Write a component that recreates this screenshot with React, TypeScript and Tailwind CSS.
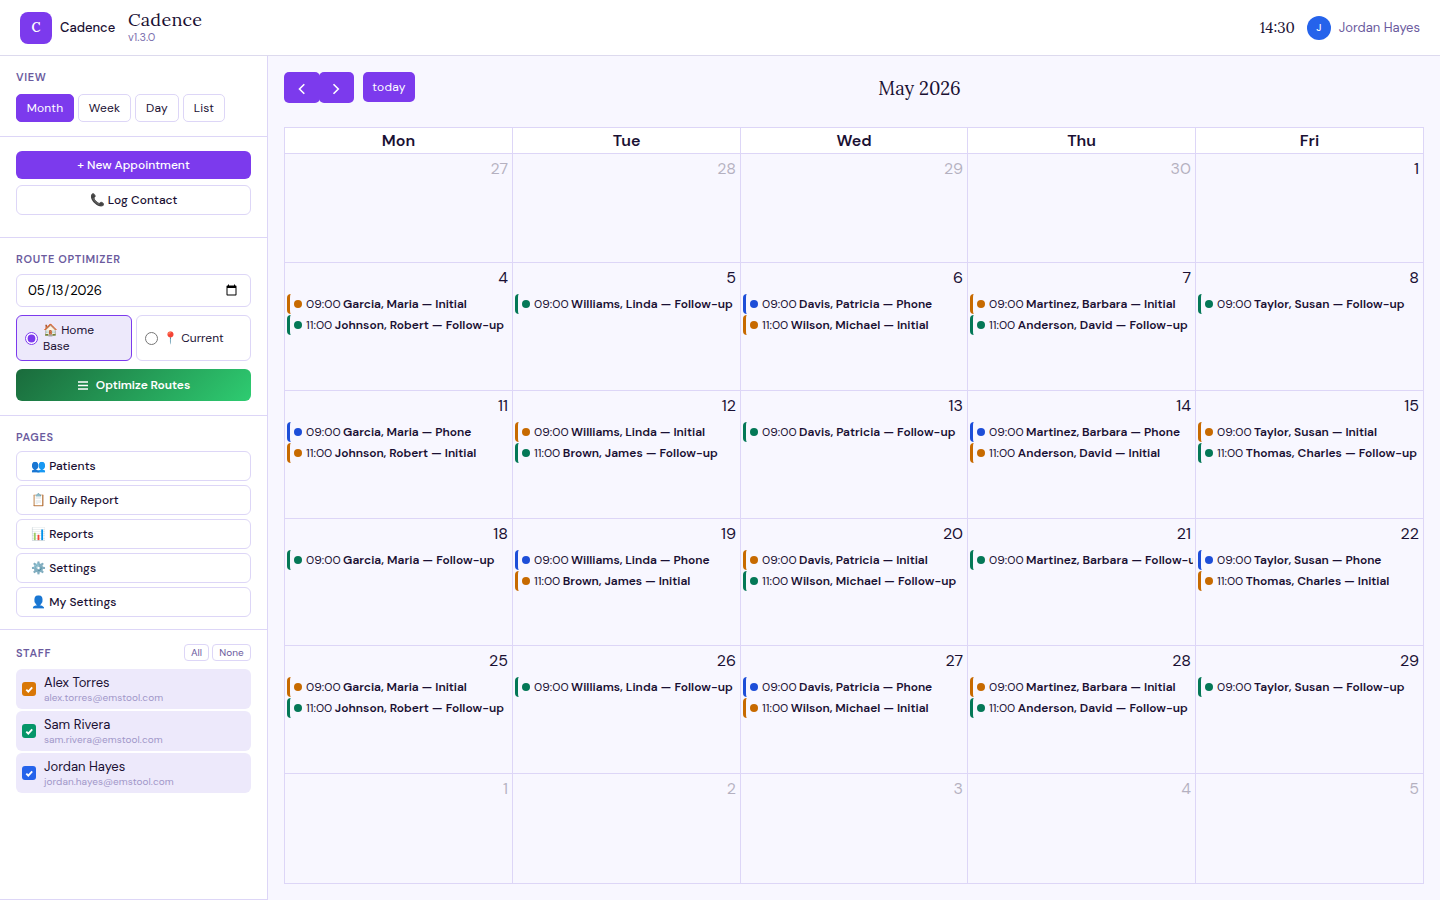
import React from 'react';

type Kind = 'Initial' | 'Follow-up' | 'Phone';
type Visit = { time: string; name: string; kind: Kind };
type Day = { day: number; muted?: boolean; visits?: Visit[] };

const views = [
  { label: 'Month', className: 'w-[58px] bg-[#7c3aed] border-[#7c3aed] text-white' },
  { label: 'Week', className: 'w-[53px] bg-white border-[#ddd6f7] text-[#1a1033]' },
  { label: 'Day', className: 'w-[44px] bg-white border-[#ddd6f7] text-[#1a1033]' },
  { label: 'List', className: 'w-[42px] bg-white border-[#ddd6f7] text-[#1a1033]' },
];

const pages = [
  { icon: '👥', label: 'Patients' },
  { icon: '📋', label: 'Daily Report' },
  { icon: '📊', label: 'Reports' },
  { icon: '⚙️', label: 'Settings' },
  { icon: '👤', label: 'My Settings' },
];

const staff = [
  { name: 'Alex Torres', email: 'alex.torres@emstool.com', color: 'bg-[#d97706]' },
  { name: 'Sam Rivera', email: 'sam.rivera@emstool.com', color: 'bg-[#059669]' },
  { name: 'Jordan Hayes', email: 'jordan.hayes@emstool.com', color: 'bg-[#2563eb]' },
];

const kindBorder: Record<Kind, string> = {
  Initial: 'border-[#c76a00]',
  'Follow-up': 'border-[#047857]',
  Phone: 'border-[#1d4ed8]',
};

const kindDot: Record<Kind, string> = {
  Initial: 'bg-[#c76a00]',
  'Follow-up': 'bg-[#047857]',
  Phone: 'bg-[#1d4ed8]',
};

const kindTracking: Record<Kind, string> = {
  Initial: 'tracking-[-0.02px]',
  'Follow-up': 'tracking-[0.03px]',
  Phone: 'tracking-[-0.02px]',
};

const at9 = (name: string, kind: Kind): Visit => ({ time: '09:00', name, kind });
const at11 = (name: string, kind: Kind): Visit => ({ time: '11:00', name, kind });

const weeks: Day[][] = [
  [
    { day: 27, muted: true },
    { day: 28, muted: true },
    { day: 29, muted: true },
    { day: 30, muted: true },
    { day: 1 },
  ],
  [
    { day: 4, visits: [at9('Garcia, Maria', 'Initial'), at11('Johnson, Robert', 'Follow-up')] },
    { day: 5, visits: [at9('Williams, Linda', 'Follow-up')] },
    { day: 6, visits: [at9('Davis, Patricia', 'Phone'), at11('Wilson, Michael', 'Initial')] },
    { day: 7, visits: [at9('Martinez, Barbara', 'Initial'), at11('Anderson, David', 'Follow-up')] },
    { day: 8, visits: [at9('Taylor, Susan', 'Follow-up')] },
  ],
  [
    { day: 11, visits: [at9('Garcia, Maria', 'Phone'), at11('Johnson, Robert', 'Initial')] },
    { day: 12, visits: [at9('Williams, Linda', 'Initial'), at11('Brown, James', 'Follow-up')] },
    { day: 13, visits: [at9('Davis, Patricia', 'Follow-up')] },
    { day: 14, visits: [at9('Martinez, Barbara', 'Phone'), at11('Anderson, David', 'Initial')] },
    { day: 15, visits: [at9('Taylor, Susan', 'Initial'), at11('Thomas, Charles', 'Follow-up')] },
  ],
  [
    { day: 18, visits: [at9('Garcia, Maria', 'Follow-up')] },
    { day: 19, visits: [at9('Williams, Linda', 'Phone'), at11('Brown, James', 'Initial')] },
    { day: 20, visits: [at9('Davis, Patricia', 'Initial'), at11('Wilson, Michael', 'Follow-up')] },
    { day: 21, visits: [at9('Martinez, Barbara', 'Follow-up')] },
    { day: 22, visits: [at9('Taylor, Susan', 'Phone'), at11('Thomas, Charles', 'Initial')] },
  ],
  [
    { day: 25, visits: [at9('Garcia, Maria', 'Initial'), at11('Johnson, Robert', 'Follow-up')] },
    { day: 26, visits: [at9('Williams, Linda', 'Follow-up')] },
    { day: 27, visits: [at9('Davis, Patricia', 'Phone'), at11('Wilson, Michael', 'Initial')] },
    { day: 28, visits: [at9('Martinez, Barbara', 'Initial'), at11('Anderson, David', 'Follow-up')] },
    { day: 29, visits: [at9('Taylor, Susan', 'Follow-up')] },
  ],
  [
    { day: 1, muted: true },
    { day: 2, muted: true },
    { day: 3, muted: true },
    { day: 4, muted: true },
    { day: 5, muted: true },
  ],
];

const Header = () => (
  <header className="flex items-center h-14 px-5 bg-white border-b border-[#dddaee] shrink-0">
    <div className="flex items-center justify-center size-8 rounded-lg bg-[#7c3aed] text-white text-[13px] leading-none font-semibold font-['Lora','Liberation_Serif',serif]">
      C
    </div>
    <span className="ml-2 w-[68px] text-[13px] font-medium whitespace-nowrap">Cadence</span>
    <div className="mb-1">
      <div className="text-[18px] leading-[22px] tracking-[0.25px] font-['Lora','Liberation_Serif',serif]">Cadence</div>
      <div className="text-[11px] leading-[12px] text-[#7c6fae]">v1.3.0</div>
    </div>
    <div className="ml-auto flex items-center">
      <span className="text-[15px] leading-5 font-['Lora','Liberation_Serif',serif]">14:30</span>
      <span className="ml-3 flex items-center justify-center size-6 rounded-full bg-[#2563eb] text-white text-[10px] font-medium">J</span>
      <span className="ml-2 text-[13px] text-[#6b5b9e]">Jordan Hayes</span>
    </div>
  </header>
);

const SectionTitle = ({ children }: { children: React.ReactNode }) => (
  <h3 className="text-[11px] leading-[14px] font-semibold tracking-[0.66px] text-[#6b5b9e]">{children}</h3>
);

const Sidebar = () => (
  <aside className="w-[268px] shrink-0 flex flex-col bg-white border-r border-b border-[#ddd6f7]">
    <section className="h-[81px] px-4 pt-[14px] border-b border-[#ddd6f7]">
      <SectionTitle>VIEW</SectionTitle>
      <div className="flex gap-1 mt-[10px]">
        {views.map((view) => (
          <button key={view.label} className={`h-7 rounded-[5px] border text-[12px] tracking-[0.2px] ${view.className}`}>
            {view.label}
          </button>
        ))}
      </div>
    </section>

    <section className="h-[101px] px-4 pt-[14px] border-b border-[#ddd6f7]">
      <button className="block w-full h-7 rounded-md bg-[#7c3aed] text-white text-[12px] font-medium">
        + New Appointment
      </button>
      <button className="block w-full h-[30px] mt-1.5 rounded-md border border-[#ddd6f7] text-[12px] font-medium tracking-[0.05px]">
        📞 Log Contact
      </button>
    </section>

    <section className="h-[178px] px-4 pt-[14px] border-b border-[#ddd6f7]">
      <SectionTitle>ROUTE OPTIMIZER</SectionTitle>
      <input
        type="date"
        defaultValue="2026-05-13"
        className="block w-full h-[33px] mt-2 px-[10px] rounded-md border border-[#ddd6f7] text-[13px] tracking-[-0.08px] text-black"
      />
      <div className="flex gap-1 mt-2">
        <label className="flex items-center w-[116px] h-[46px] pl-2 rounded-md border border-[#7c3aed] bg-[#ede9fb] text-[12px] leading-4">
          <input type="radio" name="origin" defaultChecked className="m-0 mr-[5px] size-[13px] shrink-0 accent-[#7c3aed]" />
          <span>
            🏠 Home
            <br />
            Base
          </span>
        </label>
        <label className="flex items-center w-[115px] h-[46px] pl-2 rounded-md border border-[#ddd6f7] text-[12px] leading-4">
          <input type="radio" name="origin" className="m-0 mr-[5px] size-[13px] shrink-0 accent-[#7c3aed]" />
          <span>📍 Current</span>
        </label>
      </div>
      <button className="flex items-center justify-center gap-2 w-full h-8 mt-2 pl-px rounded-md bg-linear-135 from-[#1a6b3c] to-[#2ecc71] text-white text-[12px] font-semibold tracking-[-0.05px]">
        <svg width="10" height="9" viewBox="0 0 10 9" stroke="currentColor" strokeWidth="1.5">
          <path d="M0 1h10M0 4.5h10M0 8h10" />
        </svg>
        Optimize Routes
      </button>
    </section>

    <section className="h-[214px] px-4 pt-[14px] border-b border-[#ddd6f7]">
      <SectionTitle>PAGES</SectionTitle>
      <nav className="flex flex-col gap-1 mt-[7px]">
        {pages.map((page) => (
          <button
            key={page.label}
            className="h-[30px] pl-[14px] rounded-md border border-[#ddd6f7] text-left text-[12px] font-medium tracking-[0.05px]"
          >
            {page.icon} {page.label}
          </button>
        ))}
      </nav>
    </section>

    <section className="px-4 pt-[14px]">
      <div className="flex items-center h-[17px]">
        <SectionTitle>STAFF</SectionTitle>
        <button className="ml-auto w-[25px] h-[17px] rounded border border-[#ddd6f7] text-[10px] leading-none text-[#6b5b9e]">All</button>
        <button className="ml-[3px] w-[39px] h-[17px] rounded border border-[#ddd6f7] text-[10px] leading-none text-[#6b5b9e]">None</button>
      </div>
      <div className="flex flex-col gap-0.5 mt-2">
        {staff.map((person) => (
          <div key={person.email} className="flex items-center h-10 px-1.5 rounded-md bg-[#ede9fb]">
            <span className={`flex items-center justify-center size-[14px] rounded-[3px] ${person.color}`}>
              <svg width="8" height="8" viewBox="0 0 8 8" fill="none" stroke="white" strokeWidth="1.9">
                <path d="M1.3 4.6l2 2L7.2 2.4" />
              </svg>
            </span>
            <div className="ml-2">
              <div className="text-[13px] leading-4">{person.name}</div>
              <div className="text-[10px] leading-[13px] tracking-[0.07px] text-[#a197c9]">{person.email}</div>
            </div>
          </div>
        ))}
      </div>
    </section>
  </aside>
);

const VisitRow = ({ visit }: { visit: Visit }) => (
  <div className={`flex items-center h-5 mb-px mx-0.5 pl-1 rounded-[4px] border-l-[3px] overflow-hidden whitespace-nowrap text-[12px] ${kindBorder[visit.kind]}`}>
    <span className={`size-2 rounded-full shrink-0 ${kindDot[visit.kind]}`} />
    <span className="ml-1 shrink-0">{visit.time}</span>
    <span className={`ml-[2.5px] font-semibold ${kindTracking[visit.kind]}`}>
      {visit.name} — {visit.kind}
    </span>
  </div>
);

const Calendar = () => (
  <main className="flex-1 min-w-0 p-4">
    <div className="flex items-start h-[55px]">
      <button className="flex items-center justify-center w-9 h-[31px] pt-0.5 rounded-[5px] bg-[#7c3aed] text-white">
        <svg width="8" height="12" viewBox="0 0 8 12" fill="none" stroke="currentColor" strokeWidth="1.6">
          <path d="M6.3 1.2L1.5 6l4.8 4.8" />
        </svg>
      </button>
      <button className="-ml-px flex items-center justify-center w-[35px] h-[31px] pt-0.5 pr-px rounded-[5px] bg-[#7c3aed] text-white">
        <svg width="8" height="12" viewBox="0 0 8 12" fill="none" stroke="currentColor" strokeWidth="1.6">
          <path d="M1.5 1.2L6.3 6l-4.8 4.8" />
        </svg>
      </button>
      <button className="ml-[9px] w-[52px] h-[30px] rounded-[5px] bg-[#7c3aed] text-white text-[12px] tracking-[0.3px]">today</button>
      <h2 className="flex-1 text-center text-[18.4px] leading-8 font-['Lora','Liberation_Serif',serif]">May 2026</h2>
    </div>

    <div className="border-l border-t border-[#ddd6f7]">
      <div className="grid grid-cols-[228px_228px_227px_228px_228px] h-[26px] bg-white">
        {['Mon', 'Tue', 'Wed', 'Thu', 'Fri'].map((name) => (
          <div key={name} className="h-[26px] border-r border-b border-[#ddd6f7] text-center text-[16px] leading-[25px] font-semibold">
            {name}
          </div>
        ))}
      </div>
      <div className="grid grid-cols-[228px_228px_227px_228px_228px] grid-rows-[109px_128px_128px_127px_128px_110px]">
        {weeks.flat().map((cell, index) => (
          <div key={index} className="min-w-0 border-r border-b border-[#ddd6f7]">
            <div className={`pr-1 pt-[3px] h-[31px] text-right text-[16px] leading-6 ${cell.muted ? 'opacity-30' : ''}`}>
              {cell.day}
            </div>
            {cell.visits?.map((visit) => (
              <VisitRow key={visit.time} visit={visit} />
            ))}
          </div>
        ))}
      </div>
    </div>
  </main>
);

const App = () => {
  return (
    <div className="flex flex-col w-[1440px] h-[900px] overflow-hidden bg-[#f8f7ff] text-[#1a1033] font-['DM_Sans','Inter',sans-serif]">
      <Header />
      <div className="flex flex-1 min-h-0">
        <Sidebar />
        <Calendar />
      </div>
    </div>
  );
};

export default App;
